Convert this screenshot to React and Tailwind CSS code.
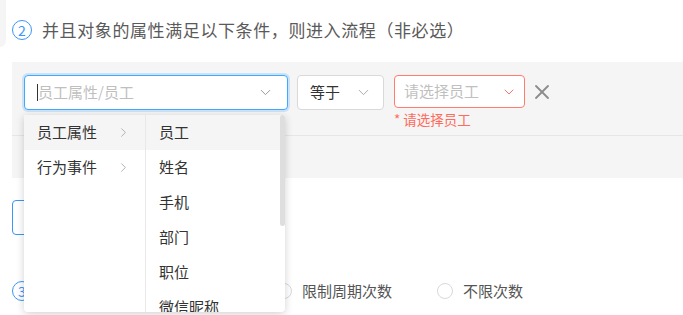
import { ChevronDown, ChevronRight, X } from 'lucide-react';

const leftItems = ['员工属性', '行为事件'];
const rightItems = ['员工', '姓名', '手机', '部门', '职位', '微信昵称'];

const Step = ({ n }) => (
  <span className="flex h-[20px] w-[20px] items-center justify-center rounded-full border-[1.5px] border-[#3a96f7] text-[14px] leading-none text-[#3a96f7]">
    {n}
  </span>
);

const Radio = ({ label }) => (
  <div className="flex items-center gap-[10px]">
    <span className="h-[16px] w-[16px] rounded-full border border-[#d9d9d9] bg-white" />
    <span className="text-[15px] text-[#555]">{label}</span>
  </div>
);

const App = () => {
  return (
    <div
      className="relative h-[315px] w-[683px] overflow-hidden bg-white"
      style={{ fontFamily: '"Noto Sans CJK SC", "Noto Sans", sans-serif' }}
    >
      {/* Header */}
      <div className="flex items-start">
        <div className="h-[47px] w-[6px] rounded-br-[6px] bg-[#f5f5f5]" />
        <div className="ml-[6px] mt-[20px] flex items-center gap-[10px]">
          <Step n="2" />
          <span className="text-[17px] leading-[20px] tracking-[0.6px] text-[#5a5a5a]">
            并且对象的属性满足以下条件，则进入流程（非必选）
          </span>
        </div>
      </div>

      {/* Condition panel */}
      <div className="ml-3 mt-[15px] h-[116px] bg-[#f5f5f5]">
        <div className="flex items-start border-b border-[#e6e6e6] pb-[7px] pl-3 pt-[13px]">
          <div className="flex h-[35px] w-[264px] items-center justify-between rounded-[4px] border border-[#40a9ff] bg-white pl-[12px] pr-[13px] shadow-[0_0_0_2px_rgba(24,144,255,0.18)]">
            <div className="flex items-center">
              <span className="h-[17px] w-px bg-[#333]" />
              <span className="text-[15px] text-[#bfbfbf]">员工属性/员工</span>
            </div>
            <ChevronDown size={17} strokeWidth={1.4} className="text-[#999]" />
          </div>
          <div className="ml-[9px] flex h-[35px] w-[87px] items-center justify-between rounded-[4px] border border-[#d9d9d9] bg-white pl-[12px] pr-[11px]">
            <span className="text-[15px] text-[#333]">等于</span>
            <ChevronDown size={17} strokeWidth={1.4} className="text-[#aaa]" />
          </div>
          <div className="ml-[10px] flex flex-col">
            <div className="flex h-[33px] w-[131px] items-center justify-between rounded-[4px] border border-[#ff7c6e] bg-white pl-[9px] pr-[7px]">
              <span className="text-[15px] text-[#bfbfbf]">请选择员工</span>
              <ChevronDown size={16} strokeWidth={1.4} className="text-[#ff6a5c]" />
            </div>
            <span className="mt-[2px] text-[13.5px] leading-[18px] text-[#ff6a5c]">* 请选择员工</span>
          </div>
          <X size={24} strokeWidth={1.8} className="ml-[5px] mt-[5px] text-[#8c8c8c]" />
        </div>
      </div>

      {/* Add condition button */}
      <div className="ml-3 mt-[22px] h-[35px] w-[110px] rounded-[4px] border border-[#3a96f7]" />

      {/* Step 3 */}
      <div className="ml-3 mt-[45px] flex items-center">
        <Step n="3" />
        <div className="ml-[244px] flex items-center gap-[45px]">
          <Radio label="限制周期次数" />
          <Radio label="不限次数" />
        </div>
      </div>

      {/* Cascader dropdown */}
      <div className="absolute left-[24px] top-[115px] flex h-[197px] w-[261px] overflow-hidden rounded-b-[4px] bg-white shadow-[0_2px_8px_rgba(0,0,0,0.18)]">
        <div className="w-[122px] border-r border-[#e8e8e8]">
          {leftItems.map((item, i) => (
            <div
              key={item}
              className={`flex h-[35px] items-center justify-between pl-[13px] pr-[14px] text-[15px] text-[#333] ${
                i === 0 ? 'bg-[#f5f5f5]' : ''
              }`}
            >
              {item}
              <ChevronRight size={15} strokeWidth={1.2} className="text-[#999]" />
            </div>
          ))}
        </div>
        <div className="relative flex-1">
          {rightItems.map((item, i) => (
            <div
              key={item}
              className={`flex h-[35px] items-center pl-[13px] text-[15px] text-[#333] ${
                i === 0 ? 'bg-[#f5f5f5]' : ''
              }`}
            >
              {item}
            </div>
          ))}
          <div className="absolute right-0 top-0 h-[111px] w-[5px] rounded-[3px] bg-[#dedede]" />
        </div>
      </div>
    </div>
  );
};

export default App;
